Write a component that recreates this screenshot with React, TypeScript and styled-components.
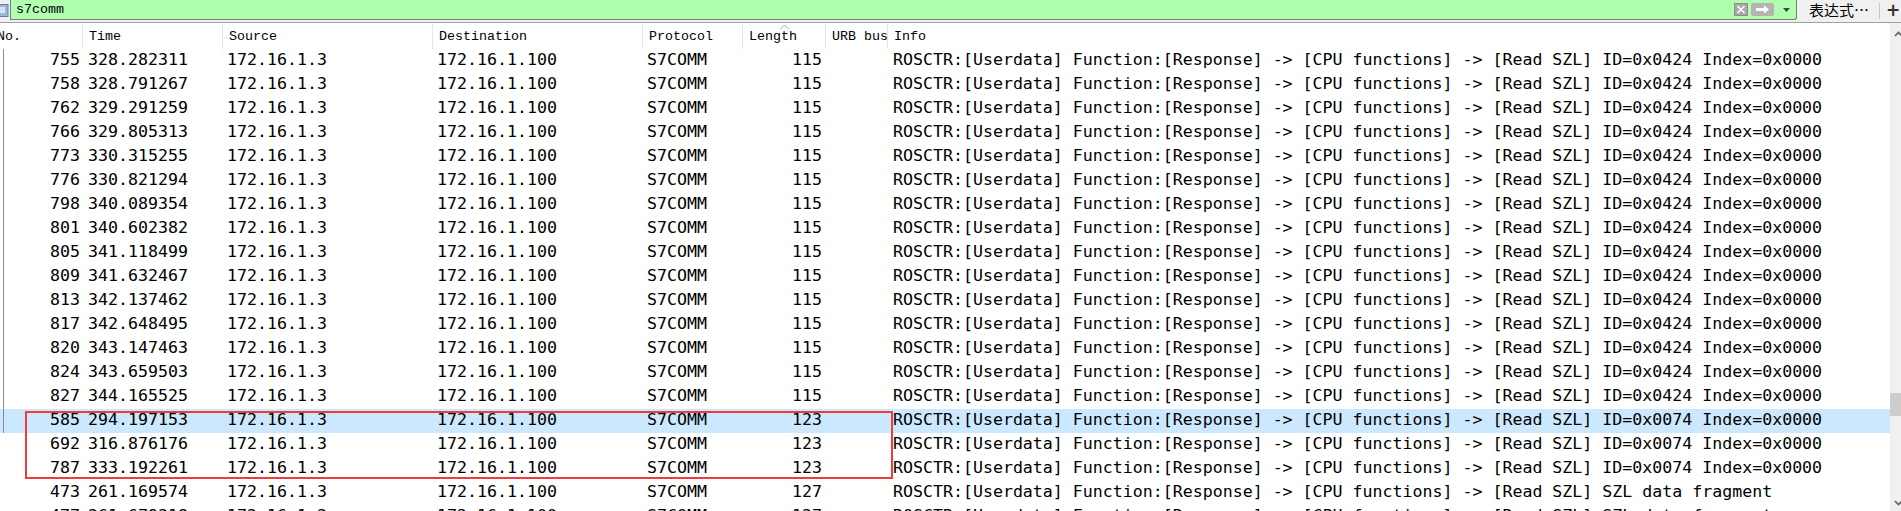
import React from 'react';
import styled, { createGlobalStyle } from 'styled-components';

const Global = createGlobalStyle`
  html, body { margin: 0; padding: 0; overflow: hidden; background: #fff; }
  #root { width: 1901px; height: 511px; overflow: hidden; }
`;

const COLS = '91px 140px 210px 210px 100px 83px 62px 1fr';

const Window = styled.div`
  width: 1907px;
  height: 511px;
  display: flex;
  flex-direction: column;
  background: #fff;
  overflow: hidden;
`;

const FilterBar = styled.div`
  flex: none;
  height: 22px;
  display: flex;
  align-items: flex-start;
  background: #f0f0f0;
  border-bottom: 1px solid #a0a0a0;
`;

const BookmarkSlot = styled.div`
  width: 10px;
  height: 20px;
  display: flex;
  align-items: center;
`;

const FilterField = styled.div`
  flex: 1;
  height: 20px;
  box-sizing: border-box;
  display: flex;
  align-items: center;
  background: #afffaf;
  border: 1px solid #7a7a7a;
  border-top: none;
  border-radius: 0 0 3px 0;
  padding: 0 3px 0 5px;
`;

const FilterText = styled.span`
  font-family: "Liberation Mono", monospace;
  font-size: 13.33px;
  color: #000;
  flex: 1;
  line-height: 19px;
`;

const FieldButtons = styled.div`
  display: flex;
  align-items: center;
  gap: 3px;
  height: 19px;
`;

const ClearBtn = styled.div`
  width: 14px;
  height: 13px;
  background: #a9a9a9;
  border: 1px solid #8c8c8c;
  box-sizing: border-box;
  display: flex;
  align-items: center;
  justify-content: center;
`;

const ApplyBtn = styled.div`
  width: 23px;
  height: 13px;
  background: #b4b4b4;
  border-radius: 2px;
  display: flex;
  align-items: center;
  justify-content: center;
`;

const DropBtn = styled.div`
  width: 14px;
  height: 17px;
  display: flex;
  align-items: center;
  justify-content: center;
  margin-left: 2px;
`;

const ToolArea = styled.div`
  flex: none;
  width: 110px;
  height: 22px;
  display: flex;
  align-items: center;
  padding-left: 12px;
  box-sizing: border-box;
`;

const ExprLabel = styled.span`
  font-family: "Noto Sans CJK SC", sans-serif;
  font-size: 15px;
  color: #000;
  line-height: 20px;
  width: 68px;
  margin-top: -2px;
  white-space: nowrap;
`;

const ToolSep = styled.div`
  width: 1px;
  height: 16px;
  background: #c8c8c8;
  margin: 0 6px 0 2px;
`;

const PlusLabel = styled.span`
  font-family: "DejaVu Sans", sans-serif;
  font-size: 17px;
  font-weight: bold;
  color: #333;
  line-height: 20px;
  margin-top: -2px;
`;

const Body = styled.div`
  flex: 1;
  display: flex;
  min-height: 0;
`;

const Table = styled.div`
  flex: 1;
  margin-left: -8px;
  display: flex;
  flex-direction: column;
  min-width: 0;
  position: relative;
`;

const HeaderRow = styled.div`
  display: grid;
  grid-template-columns: ${COLS};
  height: 26px;
  flex: none;
  background: #fff;
`;

const HeaderCell = styled.div<{ $last?: boolean; $pad?: number }>`
  position: relative;
  font-family: "Liberation Mono", monospace;
  font-size: 13.33px;
  color: #000;
  line-height: 26px;
  padding-left: ${p => p.$pad ?? 6}px;
  white-space: nowrap;
  overflow: hidden;
  border-right: ${p => (p.$last ? 'none' : '1px solid #e5e5e5')};
  margin-top: 1px;
`;

const SortMark = styled.svg`
  position: absolute;
  left: 36px;
  top: 0;
`;

const Rows = styled.div`
  position: relative;
  flex: 1;
`;

const Row = styled.div<{ $selected?: boolean }>`
  display: grid;
  grid-template-columns: ${COLS};
  height: 24px;
  background: ${p => (p.$selected ? '#cce8ff' : 'transparent')};
  font-family: "DejaVu Sans Mono", monospace;
  font-size: 16.6px;
  line-height: 22px;
  color: #000;
  white-space: nowrap;
`;

const Cell = styled.div<{ $align?: 'left' | 'right'; $pad?: number }>`
  overflow: hidden;
  text-align: ${p => p.$align ?? 'left'};
  padding: ${p => (p.$align === 'right' ? `0 ${p.$pad ?? 4}px 0 0` : `0 0 0 ${p.$pad ?? 4}px`)};
`;

const NoCell = styled(Cell)<{ $related?: boolean }>`
  position: relative;
  &::before {
    content: '';
    display: ${p => (p.$related ? 'block' : 'none')};
    position: absolute;
    left: 11px;
    top: 0;
    bottom: 0;
    width: 1px;
    background: #8a8a8a;
  }
`;

const Highlight = styled.div`
  position: absolute;
  left: 33px;
  top: 362px;
  width: 868px;
  height: 68px;
  box-sizing: border-box;
  border: 2px solid #f23a3a;
  pointer-events: none;
`;

const Scrollbar = styled.div`
  flex: none;
  width: 17px;
  background: #f0f0f0;
  display: flex;
  flex-direction: column;
  align-items: center;
`;

const ArrowBox = styled.div<{ $top?: number }>`
  height: 17px;
  width: 17px;
  display: flex;
  align-items: center;
  justify-content: center;
  flex: none;
  margin-top: ${p => p.$top ?? 0}px;
`;

const Track = styled.div`
  flex: 1;
  width: 17px;
  display: flex;
  flex-direction: column;
`;

const Thumb = styled.div<{ $offset: number; $size: number }>`
  margin-top: ${p => p.$offset}px;
  height: ${p => p.$size}px;
  width: 17px;
  background: #cdcdcd;
`;

type Pkt = { no: number; time: string; len: number; info: string };

const info424 = 'ROSCTR:[Userdata] Function:[Response] -> [CPU functions] -> [Read SZL] ID=0x0424 Index=0x0000';
const info074 = 'ROSCTR:[Userdata] Function:[Response] -> [CPU functions] -> [Read SZL] ID=0x0074 Index=0x0000';
const infoFrag = 'ROSCTR:[Userdata] Function:[Response] -> [CPU functions] -> [Read SZL] SZL data fragment';

const packets: Pkt[] = [
  { no: 755, time: '328.282311', len: 115, info: info424 },
  { no: 758, time: '328.791267', len: 115, info: info424 },
  { no: 762, time: '329.291259', len: 115, info: info424 },
  { no: 766, time: '329.805313', len: 115, info: info424 },
  { no: 773, time: '330.315255', len: 115, info: info424 },
  { no: 776, time: '330.821294', len: 115, info: info424 },
  { no: 798, time: '340.089354', len: 115, info: info424 },
  { no: 801, time: '340.602382', len: 115, info: info424 },
  { no: 805, time: '341.118499', len: 115, info: info424 },
  { no: 809, time: '341.632467', len: 115, info: info424 },
  { no: 813, time: '342.137462', len: 115, info: info424 },
  { no: 817, time: '342.648495', len: 115, info: info424 },
  { no: 820, time: '343.147463', len: 115, info: info424 },
  { no: 824, time: '343.659503', len: 115, info: info424 },
  { no: 827, time: '344.165525', len: 115, info: info424 },
  { no: 585, time: '294.197153', len: 123, info: info074 },
  { no: 692, time: '316.876176', len: 123, info: info074 },
  { no: 787, time: '333.192261', len: 123, info: info074 },
  { no: 473, time: '261.169574', len: 127, info: infoFrag },
  { no: 477, time: '261.679318', len: 127, info: infoFrag },
];

const SELECTED = 15;

export default function App() {
  return (
    <>
      <Global />
      <Window>
        <FilterBar>
          <BookmarkSlot>
            <svg width="9" height="13" viewBox="0 0 9 13">
              <rect x="-2" y="0.5" width="10" height="12" fill="#9db7d8" stroke="#5f7fa8" />
              <rect x="0" y="3" width="5" height="6" fill="#d6e3f2" />
            </svg>
          </BookmarkSlot>
          <FilterField>
            <FilterText>s7comm</FilterText>
            <FieldButtons>
              <ClearBtn>
                <svg width="10" height="9" viewBox="0 0 10 9">
                  <path d="M1.5 1 L8.5 8 M8.5 1 L1.5 8" stroke="#fff" strokeWidth="1.6" />
                </svg>
              </ClearBtn>
              <ApplyBtn>
                <svg width="15" height="9" viewBox="0 0 15 9">
                  <path d="M1 3 H9 V0.5 L14 4.5 L9 8.5 V6 H1 Z" fill="#fff" />
                </svg>
              </ApplyBtn>
              <DropBtn>
                <svg width="7" height="4" viewBox="0 0 7 4">
                  <path d="M0 0 H7 L3.5 4 Z" fill="#444" />
                </svg>
              </DropBtn>
            </FieldButtons>
          </FilterField>
          <ToolArea>
            <ExprLabel>表达式…</ExprLabel>
            <ToolSep />
            <PlusLabel>+</PlusLabel>
          </ToolArea>
        </FilterBar>
        <Body>
          <Table>
            <HeaderRow>
              <HeaderCell $pad={5}>No.</HeaderCell>
              <HeaderCell>Time</HeaderCell>
              <HeaderCell>Source</HeaderCell>
              <HeaderCell>Destination</HeaderCell>
              <HeaderCell>Protocol</HeaderCell>
              <HeaderCell>
                Length
                <SortMark width="11" height="6" viewBox="0 0 11 6">
                  <path d="M1 5.5 L5.5 1 L10 5.5" fill="none" stroke="#a8a8a8" strokeWidth="1" />
                </SortMark>
              </HeaderCell>
              <HeaderCell>URB bus id</HeaderCell>
              <HeaderCell $last>Info</HeaderCell>
            </HeaderRow>
            <Rows>
              {packets.map((p, i) => (
                <Row key={p.no} $selected={i === SELECTED}>
                  <NoCell $align="right" $pad={3} $related={i <= SELECTED}>{p.no}</NoCell>
                  <Cell $pad={5}>{p.time}</Cell>
                  <Cell>{'172.16.1.3'}</Cell>
                  <Cell>{'172.16.1.100'}</Cell>
                  <Cell>S7COMM</Cell>
                  <Cell $align="right" $pad={4}>{p.len}</Cell>
                  <Cell />
                  <Cell $pad={5}>{p.info}</Cell>
                </Row>
              ))}
              <Highlight />
            </Rows>
          </Table>
          <Scrollbar>
            <ArrowBox $top={2}>
              <svg width="9" height="6" viewBox="0 0 9 6">
                <path d="M1 5 L4.5 1.5 L8 5" fill="none" stroke="#606060" strokeWidth="1.6" />
              </svg>
            </ArrowBox>
            <Track>
              <Thumb $offset={351} $size={23} />
            </Track>
            <ArrowBox>
              <svg width="9" height="6" viewBox="0 0 9 6">
                <path d="M1 1 L4.5 4.5 L8 1" fill="none" stroke="#606060" strokeWidth="1.6" />
              </svg>
            </ArrowBox>
          </Scrollbar>
        </Body>
      </Window>
    </>
  );
}
